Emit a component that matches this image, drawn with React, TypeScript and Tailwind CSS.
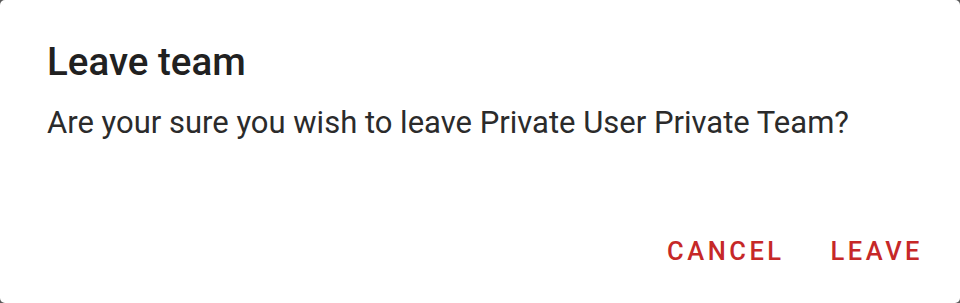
import React from "react";

export default function App() {
  return (
    <div className="w-[960px] h-[303px] bg-[#5a5a5a]" style={{ fontFamily: "Roboto, 'Noto Sans', sans-serif" }}>
      <div className="w-full h-full bg-white rounded-[5px] flex flex-col">
        <div className="pt-[38px] px-[47px]">
          <h1 className="text-[38.5px] leading-[48px] font-medium text-[#212121]">Leave team</h1>
          <p className="mt-[17px] text-[31px] leading-[40px] text-[#2b2b2b]">
            Are your sure you wish to leave Private User Private Team?
          </p>
        </div>
        <div className="mt-auto flex justify-end items-center gap-[46px] pr-[37px] pb-[35px]">
          <button className="text-[25.5px] leading-[34px] font-medium tracking-[3.5px] text-[#c62828]">CANCEL</button>
          <button className="text-[25.5px] leading-[34px] font-medium tracking-[3.5px] text-[#c62828]">LEAVE</button>
        </div>
      </div>
    </div>
  );
}
